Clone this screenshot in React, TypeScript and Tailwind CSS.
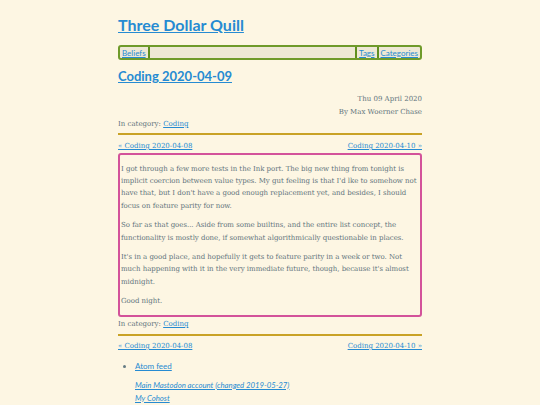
import React from 'react';

const sans = "font-['Lato',sans-serif]";
const serif = "font-['DejaVu_Serif',serif]";

const Sep = () => <span className="mx-[2px] inline-block h-[11px] w-[2px] bg-[#5f8f1f]" />;

const PostNav = () => (
  <div className="flex justify-between text-[7px] leading-[12px]">
    <a href="#" className="text-[#268bd2] underline">« Coding 2020-04-08</a>
    <a href="#" className="text-[#268bd2] underline">Coding 2020-04-10 »</a>
  </div>
);

const Category = () => (
  <p className="text-[7px] leading-[12px]">
    In category: <a href="#" className="text-[#268bd2] underline">Coding</a>
  </p>
);

export default function App() {
  return (
    <div className={`min-h-screen bg-[#fdf6e3] text-[#5f747c] ${serif}`}>
      <div className="mx-auto w-[304px] pt-[13px]">
        {/* Site title */}
        <h1 className={`${sans} text-[16px] font-bold leading-[24px]`}>
          <a href="#" className="text-[#268bd2] underline">Three Dollar Quill</a>
        </h1>

        {/* Site nav */}
        <nav className={`${sans} mt-[8px] flex h-[15px] items-center rounded-[3px] border-2 border-[#6f9a2a] bg-[#eee8d5] px-[2px] text-[8px]`}>
          <a href="#" className="text-[#268bd2] underline">Beliefs</a>
          <Sep />
          <div className="flex-1" />
          <Sep />
          <a href="#" className="text-[#268bd2] underline">Tags</a>
          <Sep />
          <a href="#" className="text-[#268bd2] underline">Categories</a>
        </nav>

        {/* Post header */}
        <h2 className={`${sans} mt-[7px] text-[13px] font-bold leading-[18px]`}>
          <a href="#" className="text-[#268bd2] underline">Coding 2020-04-09</a>
        </h2>
        <div className="mt-[8px] text-right text-[7px] leading-[12.5px]">
          <p>Thu 09 April 2020</p>
          <p>By Max Woerner Chase</p>
        </div>
        <Category />
        <hr className="mt-[3px] border-0 border-t-2 border-[#c9a227]" />
        <div className="mt-[5px]">
          <PostNav />
        </div>

        {/* Post body */}
        <article className="mt-[1px] rounded-[3px] border-2 border-[#d3529a] px-[1px] pb-[7.5px] pt-[8px] text-[7px] leading-[12.2px] tracking-[-0.03px]">
          <p>
            I got through a few more tests in the Ink port. The big new thing from tonight is implicit coercion between
            value types. My gut feeling is that I'd lke to somehow not have that, but I don't have a good enough
            replacement yet, and besides, I should focus on feature parity for now.
          </p>
          <p className="mt-[7.5px]">
            So far as that goes... Aside from some builtins, and the entire list concept, the functionality is mostly
            done, if somewhat algorithmically questionable in places.
          </p>
          <p className="mt-[7.5px]">
            It's in a good place, and hopefully it gets to feature parity in a week or two. Not much happening with it
            in the very immediate future, though, because it's almost midnight.
          </p>
          <p className="mt-[7.5px]">Good night.</p>
        </article>
        <div className="mt-[1px]">
          <Category />
        </div>
        <hr className="mt-[4px] border-0 border-t-2 border-[#c9a227]" />
        <div className="mt-[4px]">
          <PostNav />
        </div>

        {/* Footer */}
        <ul className={`${sans} mt-[8px] list-disc pl-[17px] text-[8px] leading-[12px] marker:text-[#657b83]`}>
          <li>
            <a href="#" className="text-[#268bd2] underline">Atom feed</a>
          </li>
        </ul>
        <div className={`${sans} mt-[6.5px] pl-[17px] text-[7.75px] italic leading-[13px]`}>
          <p><a href="#" className="text-[#268bd2] underline">Main Mastodon account (changed 2019-05-27)</a></p>
          <p><a href="#" className="text-[#268bd2] underline">My Cohost</a></p>
        </div>
      </div>
    </div>
  );
}
